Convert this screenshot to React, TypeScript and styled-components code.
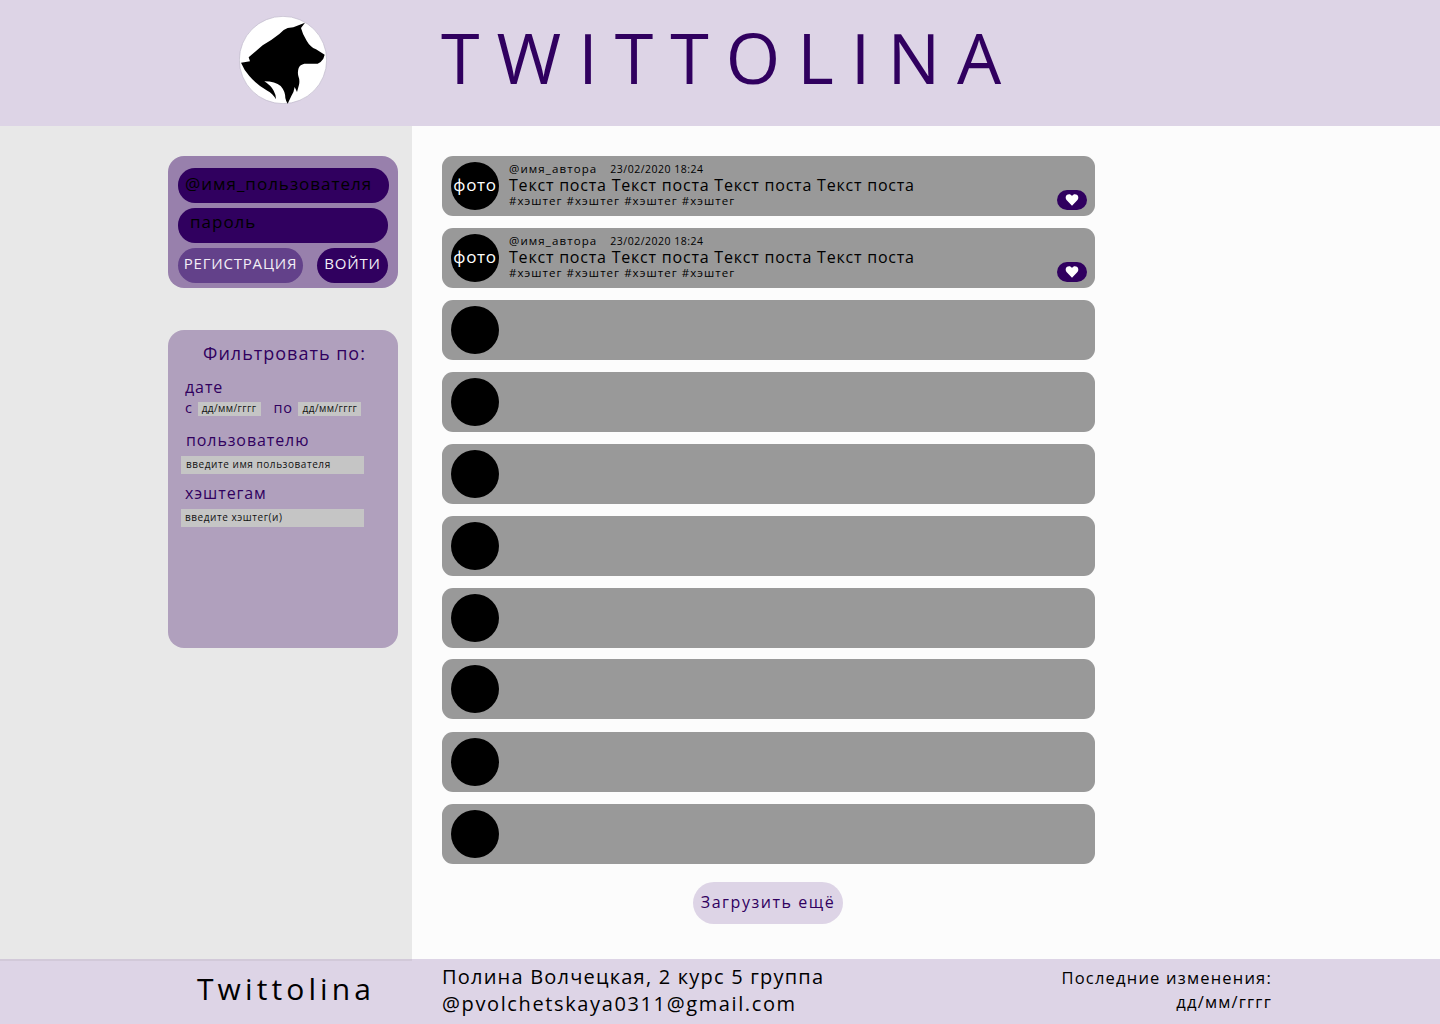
import React from 'react';
import styled, { createGlobalStyle } from 'styled-components';

const INK = '#30005f';
const LILAC = '#ddd4e6';

const GlobalStyle = createGlobalStyle`
    html, body {
        margin: 0;
        padding: 0;
        background: #fcfcfc;
        font-family: 'Open Sans', 'Noto Sans', sans-serif;
    }
`;

const Page = styled.div`
    width: 1440px;
    height: 1024px;
    display: flex;
    flex-direction: column;
    overflow: hidden;
`;

const Header = styled.header`
    height: 126px;
    flex-shrink: 0;
    display: flex;
    align-items: center;
    background: ${LILAC};
    padding: 0 0 6px 239px;
    box-sizing: border-box;
`;

const Logo = styled.svg`
    width: 88px;
    height: 88px;
    flex-shrink: 0;
`;

const SiteTitle = styled.h1`
    margin: -6px 0 0 114px;
    font-size: 70px;
    font-weight: 400;
    line-height: 1;
    letter-spacing: 17px;
    color: ${INK};
    white-space: nowrap;
`;

const Body = styled.div`
    flex: 1;
    display: flex;
    min-height: 0;
`;

const Sidebar = styled.aside`
    width: 412px;
    flex-shrink: 0;
    box-sizing: border-box;
    background: #e8e8e8;
    padding: 30px 0 0 168px;
    display: flex;
    flex-direction: column;
    gap: 42px;
`;

const LoginPanel = styled.section`
    width: 230px;
    height: 132px;
    box-sizing: border-box;
    background: #9880ac;
    border-radius: 16px;
    padding: 12px 10px;
    display: flex;
    flex-direction: column;
    gap: 5px;
`;

const LoginInput = styled.div<{ $indent: number; $line: number; $width: number }>`
    height: 35px;
    flex-shrink: 0;
    width: ${props => props.$width}px;
    box-sizing: border-box;
    border-radius: 17px;
    background: ${INK};
    color: #000;
    font-size: 17px;
    line-height: ${props => props.$line}px;
    letter-spacing: 1px;
    padding-left: ${props => props.$indent}px;
    white-space: nowrap;
`;

const LoginActions = styled.div`
    display: flex;
    justify-content: space-between;
    width: 210px;
`;

const PillButton = styled.button<{ $width: number; $bg: string }>`
    width: ${props => props.$width}px;
    height: 35px;
    border: 0;
    padding: 0 0 5px;
    border-radius: 18px;
    background: ${props => props.$bg};
    color: #f2eef6;
    font-family: inherit;
    font-size: 15px;
    letter-spacing: 0.8px;
    white-space: nowrap;
`;

const FilterPanel = styled.section`
    width: 230px;
    height: 318px;
    box-sizing: border-box;
    background: #b0a0bd;
    border-radius: 16px;
    padding: 11px 13px;
    color: ${INK};
`;

const FilterTitle = styled.div`
    font-size: 18px;
    line-height: 24px;
    letter-spacing: 1px;
    text-align: center;
    padding-left: 3px;
    margin-bottom: 11px;
`;

const FilterLabel = styled.div<{ $indent: number; $top: number }>`
    font-size: 16px;
    line-height: 22px;
    letter-spacing: 0.9px;
    padding-left: ${props => props.$indent}px;
    margin-top: ${props => props.$top}px;
`;

const DateRow = styled.div`
    display: flex;
    align-items: center;
    height: 16px;
    margin-top: 1px;
    padding-left: 4px;
    font-size: 14.5px;
    letter-spacing: 0.6px;
`;

const DateInput = styled.span<{ $left: number; $right: number }>`
    width: 63px;
    height: 14px;
    margin: 3px ${props => props.$right}px 0 ${props => props.$left}px;
    background: #c5c5c5;
    color: #111;
    font-size: 10px;
    line-height: 13px;
    letter-spacing: 0.4px;
    text-align: center;
`;

const TextInput = styled.div<{ $indent: number }>`
    width: 183px;
    height: 18px;
    margin-top: 5px;
    box-sizing: border-box;
    background: #c5c5c5;
    color: #111;
    font-size: 10px;
    line-height: 16px;
    letter-spacing: 0.55px;
    padding-left: ${props => props.$indent}px;
`;

const Main = styled.main`
    flex: 1;
    background: #fcfcfc;
    padding: 30px 0 0 30px;
    display: flex;
    flex-direction: column;
`;

const Feed = styled.div`
    width: 653px;
    display: flex;
    flex-direction: column;
    gap: 12px;
`;

const PostCard = styled.article<{ $shift?: number }>`
    height: 60px;
    box-sizing: border-box;
    background: #999999;
    border-radius: 11px;
    padding: 6px 8px 6px 9px;
    display: flex;
    align-items: center;
    margin-top: ${props => props.$shift ?? 0}px;
`;

const Avatar = styled.div`
    width: 48px;
    height: 48px;
    flex-shrink: 0;
    box-sizing: border-box;
    padding-bottom: 3px;
    border-radius: 50%;
    background: #000;
    color: #fff;
    display: flex;
    align-items: center;
    justify-content: center;
    font-size: 17px;
    letter-spacing: 0.7px;
`;

const PostBody = styled.div`
    flex: 1;
    padding-left: 10px;
    margin-top: -2px;
    color: #000;
    display: flex;
    flex-direction: column;
`;

const PostMeta = styled.div`
    display: flex;
    gap: 13px;
    align-items: center;
    height: 14px;
    margin-top: -2px;
    font-size: 11.5px;
    letter-spacing: 1.1px;
`;

const PostDate = styled.span`
    font-size: 10.5px;
    letter-spacing: 0.5px;
`;

const PostText = styled.div`
    font-size: 16px;
    line-height: 18px;
    letter-spacing: 0.79px;
    white-space: nowrap;
`;

const PostTags = styled.div`
    font-size: 11.5px;
    line-height: 13px;
    letter-spacing: 1.05px;
`;

const LikeButton = styled.button`
    width: 30px;
    height: 20px;
    flex-shrink: 0;
    align-self: flex-end;
    border: 0;
    padding: 0;
    border-radius: 10px;
    background: ${INK};
    display: flex;
    align-items: center;
    justify-content: center;
`;

const LoadMore = styled.button`
    align-self: flex-start;
    margin: 18px 0 0 251px;
    width: 150px;
    height: 42px;
    border: 0;
    padding: 0 0 2px;
    border-radius: 21px;
    background: ${LILAC};
    color: ${INK};
    font-family: inherit;
    font-size: 16px;
    letter-spacing: 1.55px;
`;

const Footer = styled.footer`
    height: 65px;
    flex-shrink: 0;
    background: ${LILAC};
    display: flex;
    color: #000;
`;

const FooterBrand = styled.div`
    width: 412px;
    height: 65px;
    box-sizing: border-box;
    border-top: 2px solid #d2c9d9;
    padding: 8px 0 0 197px;
    font-size: 30px;
    line-height: 40px;
    letter-spacing: 4.1px;
`;

const FooterAuthor = styled.div`
    width: 600px;
    padding: 4px 0 0 30px;
    font-size: 20px;
    line-height: 27px;
    white-space: nowrap;
`;

const AuthorLine = styled.div<{ $spacing: number }>`
    letter-spacing: ${props => props.$spacing}px;
`;

const FooterUpdated = styled.div`
    flex: 1;
    padding: 7px 168px 0 0;
    text-align: right;
    font-size: 16.5px;
    line-height: 24px;
    letter-spacing: 1.2px;
`;

const WolfLogo = () => (
    <Logo viewBox="9 12 264 264">
        <circle cx="141" cy="144" r="131" fill="#fff" stroke="#bdb6c8" strokeWidth="2" />
        <path
            fill="#000"
            d="M207 32 L195 48 Q200 68 212 86 Q222 104 240 112 L266 128 L262 140 Q256 150 245 155 L205 155 Q192 158 188 168 Q184 180 187 192 Q192 205 189 218 L183 240 L176 225 Q174 240 166 252 L155 275 Q150 268 148 258 Q148 238 134 222 Q118 208 85 208 Q104 220 113 236 Q120 248 120 262 Q110 244 94 236 Q62 218 40 192 Q24 174 15 152 L42 148 L38 136 L80 100 Q105 86 130 66 Q142 52 155 48 L172 46 Z"
        />
    </Logo>
);

const Heart = () => (
    <svg width="14" height="12" viewBox="0 0 24 22">
        <path
            fill="#fff"
            d="M12 21.5 L2.4 11.6 C-0.6 8.4 0 3.8 3 1.6 C6 -0.6 10 0.4 12 3.6 C14 0.4 18 -0.6 21 1.6 C24 3.8 24.6 8.4 21.6 11.6 Z"
        />
    </svg>
);

const FILLED_POSTS = [0, 1];
// eighth card sits a pixel higher in the layout
const EMPTY_POSTS = [
    { id: 2, shift: 0 },
    { id: 3, shift: 0 },
    { id: 4, shift: 0 },
    { id: 5, shift: 0 },
    { id: 6, shift: 0 },
    { id: 7, shift: -1 },
    { id: 8, shift: 1 },
    { id: 9, shift: 0 },
];

const App = () => (
    <Page>
        <GlobalStyle />
        <Header>
            <WolfLogo />
            <SiteTitle>TWITTOLINA</SiteTitle>
        </Header>
        <Body>
            <Sidebar>
                <LoginPanel>
                    <LoginInput $indent={7} $line={31} $width={211}>
                        @имя_пользователя
                    </LoginInput>
                    <LoginInput $indent={12} $line={27} $width={210}>
                        пароль
                    </LoginInput>
                    <LoginActions>
                        <PillButton $width={125} $bg="#63418a">
                            РЕГИСТРАЦИЯ
                        </PillButton>
                        <PillButton $width={71} $bg={INK}>
                            ВОЙТИ
                        </PillButton>
                    </LoginActions>
                </LoginPanel>
                <FilterPanel>
                    <FilterTitle>Фильтровать по:</FilterTitle>
                    <FilterLabel $indent={4} $top={0}>
                        дате
                    </FilterLabel>
                    <DateRow>
                        с
                        <DateInput $left={5} $right={13}>
                            дд/мм/гггг
                        </DateInput>
                        по
                        <DateInput $left={6} $right={0}>
                            дд/мм/гггг
                        </DateInput>
                    </DateRow>
                    <FilterLabel $indent={5} $top={14}>
                        пользователю
                    </FilterLabel>
                    <TextInput $indent={5}>введите имя пользователя</TextInput>
                    <FilterLabel $indent={4} $top={8}>
                        хэштегам
                    </FilterLabel>
                    <TextInput $indent={4}>введите хэштег(и)</TextInput>
                </FilterPanel>
            </Sidebar>
            <Main>
                <Feed>
                    {FILLED_POSTS.map(id => (
                        <PostCard key={id}>
                            <Avatar>фото</Avatar>
                            <PostBody>
                                <PostMeta>
                                    <span>@имя_автора</span>
                                    <PostDate>23/02/2020 18:24</PostDate>
                                </PostMeta>
                                <PostText>Текст поста Текст поста Текст поста Текст поста</PostText>
                                <PostTags>#хэштег #хэштег #хэштег #хэштег</PostTags>
                            </PostBody>
                            <LikeButton aria-label="like">
                                <Heart />
                            </LikeButton>
                        </PostCard>
                    ))}
                    {EMPTY_POSTS.map(post => (
                        <PostCard key={post.id} $shift={post.shift}>
                            <Avatar />
                        </PostCard>
                    ))}
                </Feed>
                <LoadMore>Загрузить ещё</LoadMore>
            </Main>
        </Body>
        <Footer>
            <FooterBrand>Twittolina</FooterBrand>
            <FooterAuthor>
                <AuthorLine $spacing={1.21}>Полина Волчецкая, 2 курс 5 группа</AuthorLine>
                <AuthorLine $spacing={1.62}>@pvolchetskaya0311@gmail.com</AuthorLine>
            </FooterAuthor>
            <FooterUpdated>
                Последние изменения:
                <br />
                дд/мм/гггг
            </FooterUpdated>
        </Footer>
    </Page>
);

export default App;
